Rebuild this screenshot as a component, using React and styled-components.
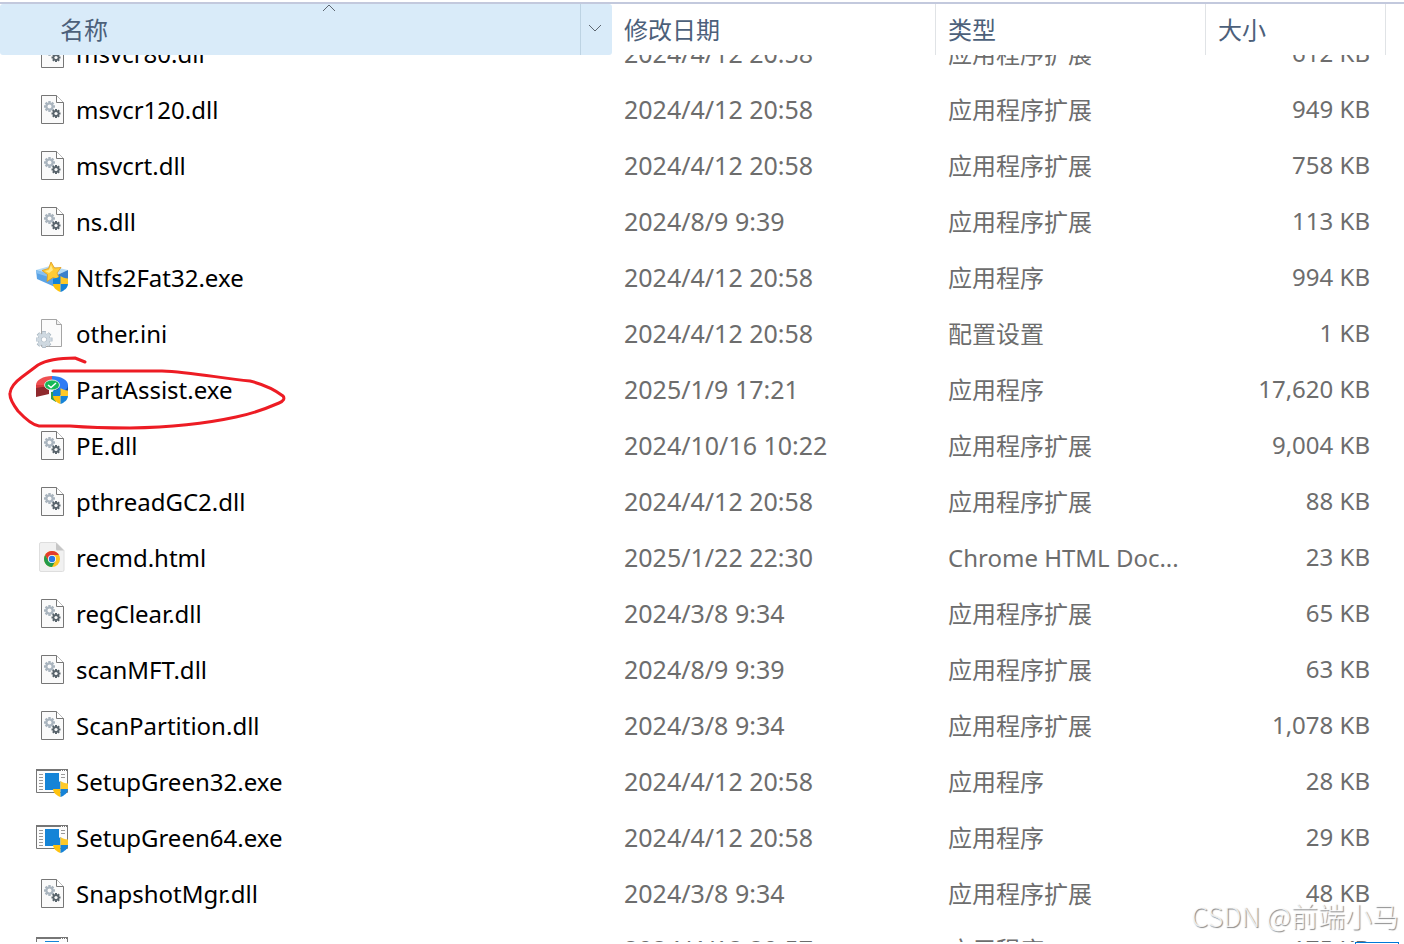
import React from "react"
import styled, { createGlobalStyle } from "styled-components"

const DLL = "应用程序扩展"
const EXE = "应用程序"

const files = [
  { name: "msvcr80.dll", date: "2024/4/12 20:58", type: DLL, size: "612 KB", icon: "dll" },
  { name: "msvcr120.dll", date: "2024/4/12 20:58", type: DLL, size: "949 KB", icon: "dll" },
  { name: "msvcrt.dll", date: "2024/4/12 20:58", type: DLL, size: "758 KB", icon: "dll" },
  { name: "ns.dll", date: "2024/8/9 9:39", type: DLL, size: "113 KB", icon: "dll" },
  { name: "Ntfs2Fat32.exe", date: "2024/4/12 20:58", type: EXE, size: "994 KB", icon: "ntfs" },
  { name: "other.ini", date: "2024/4/12 20:58", type: "配置设置", size: "1 KB", icon: "ini" },
  { name: "PartAssist.exe", date: "2025/1/9 17:21", type: EXE, size: "17,620 KB", icon: "part", marked: true },
  { name: "PE.dll", date: "2024/10/16 10:22", type: DLL, size: "9,004 KB", icon: "dll" },
  { name: "pthreadGC2.dll", date: "2024/4/12 20:58", type: DLL, size: "88 KB", icon: "dll" },
  { name: "recmd.html", date: "2025/1/22 22:30", type: "Chrome HTML Doc...", size: "23 KB", icon: "chrome" },
  { name: "regClear.dll", date: "2024/3/8 9:34", type: DLL, size: "65 KB", icon: "dll" },
  { name: "scanMFT.dll", date: "2024/8/9 9:39", type: DLL, size: "63 KB", icon: "dll" },
  { name: "ScanPartition.dll", date: "2024/3/8 9:34", type: DLL, size: "1,078 KB", icon: "dll" },
  { name: "SetupGreen32.exe", date: "2024/4/12 20:58", type: EXE, size: "28 KB", icon: "setup" },
  { name: "SetupGreen64.exe", date: "2024/4/12 20:58", type: EXE, size: "29 KB", icon: "setup" },
  { name: "SnapshotMgr.dll", date: "2024/3/8 9:34", type: DLL, size: "48 KB", icon: "dll" },
  { name: "", date: "2024/4/12 20:57", type: EXE, size: "175 KB", icon: "setup" },
]

const Gear = ({ x, y, r, color, hole = "#fafafa" }) => (
  <g transform={`translate(${x} ${y})`}>
    {[0, 45, 90, 135].map(angle => (
      <rect
        key={angle}
        x={-r * 0.22}
        y={-r}
        width={r * 0.44}
        height={r * 2}
        fill={color}
        transform={`rotate(${angle})`}
      />
    ))}
    <circle r={r * 0.74} fill={color} />
    <circle r={r * 0.36} fill={hole} />
  </g>
)

const Shield = ({ x, y }) => (
  <g transform={`translate(${x} ${y})`}>
    <path d="M7.5 0C5.5 1.6 3 2.4 0 2.4V8h7.5Z" fill="#1683d8" />
    <path d="M7.5 0c2 1.6 4.5 2.4 7.5 2.4V8H7.5Z" fill="#ffc928" />
    <path d="M0 8c.4 4 3.5 6.5 7.5 8V8Z" fill="#ffc20e" />
    <path d="M15 8c-.4 4-3.5 6.5-7.5 8V8Z" fill="#1683d8" />
  </g>
)

const DllIcon = () => (
  <>
    <path d="M5.5 1.5h15l7 7v21h-22Z" fill="#fafafa" stroke="#767676" />
    <path d="M20.5 1.5v7h7" fill="#fff" stroke="#767676" />
    <Gear x={13.5} y={12.5} r={5.5} color="#a9b4be" />
    <Gear x={20} y={19.5} r={4.5} color="#59646c" />
  </>
)

const NtfsIcon = () => (
  <>
    <path d="M0 8 14 4l18 4-13 6Z" fill="#b5dbf7" />
    <path d="m0 8 19 6v11L1 17Z" fill="#5aa3e6" />
    <path d="m0 8 19 6v3L0 11Z" fill="#86c0f0" />
    <path d="m19 14 13-6v9l-13 8Z" fill="#3b80cc" />
    <path
      d="m15 0 3.5 6 6.5-.5-4 5.5 3 7-7-2.500-6 4 .5-7-5.500-4 6.500-2Z"
      fill="#ffcb35"
      stroke="#e09a1c"
      strokeWidth=".8"
    />
    <path d="m15 3 2 5-4 3-4-2 4-1Z" fill="#ffe98a" />
    <Shield x={17} y={14} />
  </>
)

const IniIcon = () => (
  <>
    <path d="M5.5 1.5h15l5 5v22h-20Z" fill="#fbfbfb" stroke="#a5a5a5" />
    <path d="M20.5 1.5v5h5" fill="#f0f0f0" stroke="#a5a5a5" />
    <Gear x={8} y={21.5} r={8.5} color="#a9b6c1" />
    <Gear x={8} y={21.5} r={7.7} color="#cfd9e1" hole="#a9b6c1" />
    <circle cx="8" cy="21.5" r="2.2" fill="#fff" />
  </>
)

const PartIcon = () => (
  <>
    <path d="M0 11v12l13-3v-7Z" fill="#8f292d" />
    <path d="M18 11h14v9l-14 2Z" fill="#174f9f" />
    <path d="M16 11H0c0-5 7-9 16-9Z" fill="#ef4f51" />
    <path d="M0 11v3l12-2 4-1Z" fill="#d93a3e" />
    <path d="M16 2c9 0 16 4 16 9 0 3-2 5-5 6l-11-6Z" fill="#2f7cf4" />
    <path d="m15 18 5-1v11l-5-3Z" fill="#2f9d50" />
    <ellipse cx="16" cy="11" rx="7.5" ry="5" fill="#16b957" stroke="#d4eadb" />
    <path d="m12 11 3 2.5 5-4.5" fill="none" stroke="#fff" strokeWidth="1.5" />
    <Shield x={17} y={14} />
  </>
)

const ChromeIcon = () => (
  <>
    <path
      d="M5 .5h15l8 8v19.5a1.5 1.5 0 0 1-1.5 1.5H5A1.5 1.5 0 0 1 3.5 28V2A1.5 1.5 0 0 1 5 .5Z"
      fill="#f1f1f1"
      stroke="#dedede"
    />
    <path d="M20 .5V7a1.5 1.5 0 0 0 1.5 1.5H28Z" fill="#c6c6c6" />
    <circle cx="16" cy="17" r="8" fill="#fcc31e" />
    <path d="M9.1 13a8 8 0 0 1 13.8 0H16l-3.5 6Z" fill="#e33b2e" />
    <path d="m9.1 13 3.4 6 3.5 2 3.4-2L16 25A8 8 0 0 1 9.1 13Z" fill="#229b4b" />
    <circle cx="16" cy="17" r="4" fill="#fff" />
    <circle cx="16" cy="17" r="3.2" fill="#2878e5" />
  </>
)

const SetupIcon = () => (
  <>
    <path d="M.5 4.5h31v22H.5Z" fill="#fcfcfc" stroke="#767676" />
    <path d="M0 3h32v2H0Z" fill="#767676" />
    <path d="M25 4.5h1m1 0h1m1 0h1" stroke="#fff" />
    <path
      d="M3 8.5h4M3 11.5h4M3 14.5h4M3 17.5h4M3 20.5h4M3 23.5h4M25 8.5h4M25 11.5h4"
      stroke="#999"
    />
    <path d="M9 7h14v17H9Z" fill="#1584d7" />
    <Shield x={17} y={15} />
  </>
)

const icons = {
  dll: DllIcon,
  ntfs: NtfsIcon,
  ini: IniIcon,
  part: PartIcon,
  chrome: ChromeIcon,
  setup: SetupIcon,
}

const FileIcon = ({ kind }) => {
  const Drawing = icons[kind]
  return (
    <IconBox viewBox="0 0 32 32" aria-hidden="true">
      <Drawing />
    </IconBox>
  )
}

const App = () => (
  <Explorer>
    <GlobalStyle />
    <FileTable>
      <Head>
        <Row $head>
          <HeadCell $active aria-sort="ascending">
            <SortArrow viewBox="0 0 14 8" aria-hidden="true">
              <path d="m1 7 6-6 6 6" />
            </SortArrow>
            <SortButton $first>名称</SortButton>
            <FilterButton aria-label="筛选">
              <svg width="14" height="8" viewBox="0 0 14 8">
                <path d="m1 1 6 6 6-6" fill="none" stroke="#5d6670" />
              </svg>
            </FilterButton>
          </HeadCell>
          <HeadCell>
            <SortButton>修改日期</SortButton>
          </HeadCell>
          <HeadCell>
            <SortButton>类型</SortButton>
          </HeadCell>
          <HeadCell>
            <SortButton>大小</SortButton>
          </HeadCell>
        </Row>
      </Head>
      <Body>
        {files.map(({ name, date, type, size, icon, marked }, index) => (
          <Row key={index}>
            <NameCell>
              <FileIcon kind={icon} />
              {name}
              {marked && (
                <Mark viewBox="0 0 296 80" aria-hidden="true">
                  <path d="M53 17H162C190 18 220 24 250 27Q270 32 283 42Q286 46 279 49Q256 59 236 63Q190 73 130 74Q95 74 70 72H39Q31 71 18 57Q9 45 10 39Q11 31 22 23L38 11Q50 4 75 4L85 8" />
                </Mark>
              )}
            </NameCell>
            <DateCell>{date}</DateCell>
            <Cell>{type}</Cell>
            <SizeCell>{size}</SizeCell>
          </Row>
        ))}
      </Body>
    </FileTable>
    <Watermark>CSDN @前端小马</Watermark>
    <Corner />
  </Explorer>
)

export default App

const GlobalStyle = createGlobalStyle`
  body {
    margin: 0;
    background: #fff;
  }

  * {
    box-sizing: border-box;
  }
`

const Explorer = styled.main`
  position: relative;
  height: 100vh;
  padding: 2px 0;
  overflow: hidden;
  font-family: "Noto Sans", "Noto Sans CJK SC", sans-serif;
  font-size: 24px;
  line-height: 32px;
  color: #6d6d6d;
`

const FileTable = styled.table`
  display: flex;
  flex-direction: column;
  height: 100%;
  overflow: hidden;
`

const Head = styled.thead`
  display: block;
  position: relative;
  z-index: 1;
  background: #fff;
  border-top: 2px solid #c3c9dd;
`

/* the list is scrolled half a row under the header */
const Body = styled.tbody`
  display: block;
  margin-top: -29px;
`

const Row = styled.tr`
  display: grid;
  grid-template-columns: minmax(0, 1fr) 324px 270px 180px 18px;
  height: ${props => (props.$head ? "51px" : "56px")};
`

const HeadCell = styled.th`
  position: relative;
  display: flex;
  padding: 0;
  font-weight: 400;
  border-right: ${props => (props.$active ? "0" : "1px solid #e0e3e6")};
  border-radius: ${props => (props.$active ? "3px" : "0")};
  background: ${props => (props.$active ? "#d9ebf9" : "#fff")};
`

const SortButton = styled.button`
  flex: 1;
  padding: 0 0 0 ${props => (props.$first ? "60px" : "12px")};
  border: 0;
  background: none;
  font: inherit;
  color: #4c607a;
  text-align: left;
`

const FilterButton = styled.button`
  display: flex;
  align-items: center;
  justify-content: center;
  width: 32px;
  padding: 0 4px 3px 0;
  border: 0;
  border-left: 1px solid #bdd3e3;
  background: none;
`

const SortArrow = styled.svg`
  position: absolute;
  top: 0;
  left: calc(50% + 16px);
  width: 14px;
  height: 8px;
  fill: none;
  stroke: #5d6670;
`

const Cell = styled.td`
  display: flex;
  align-items: center;
  padding: 0 12px;
  white-space: nowrap;
`

const DateCell = styled(Cell)`
  padding-bottom: 2px;
  font-size: 25px;
`

const SizeCell = styled(Cell)`
  justify-content: flex-end;
  padding: 0 16px 2px;
`

const NameCell = styled(Cell)`
  position: relative;
  gap: 8px;
  padding-left: 36px;
  color: #000;
`

const IconBox = styled.svg`
  flex: none;
  width: 32px;
  height: 32px;
`

const Mark = styled.svg`
  position: absolute;
  top: -8px;
  left: 0;
  z-index: 1;
  width: 296px;
  height: 80px;
  fill: none;
  stroke: #ed1c24;
  stroke-width: 3;
  stroke-linecap: round;
  stroke-linejoin: round;
  pointer-events: none;
`

const Watermark = styled.span`
  position: absolute;
  right: 5px;
  bottom: 12px;
  font-family: "Noto Sans CJK SC", sans-serif;
  font-weight: 300;
  font-size: 27px;
  color: rgba(255, 255, 255, 0.8);
  text-shadow: 1px 1px 1px #888;
`

const Corner = styled.div`
  position: absolute;
  right: 5px;
  bottom: 0;
  width: 44px;
  height: 2px;
  border: 1px solid #0078d7;
  border-bottom: 0;
`
